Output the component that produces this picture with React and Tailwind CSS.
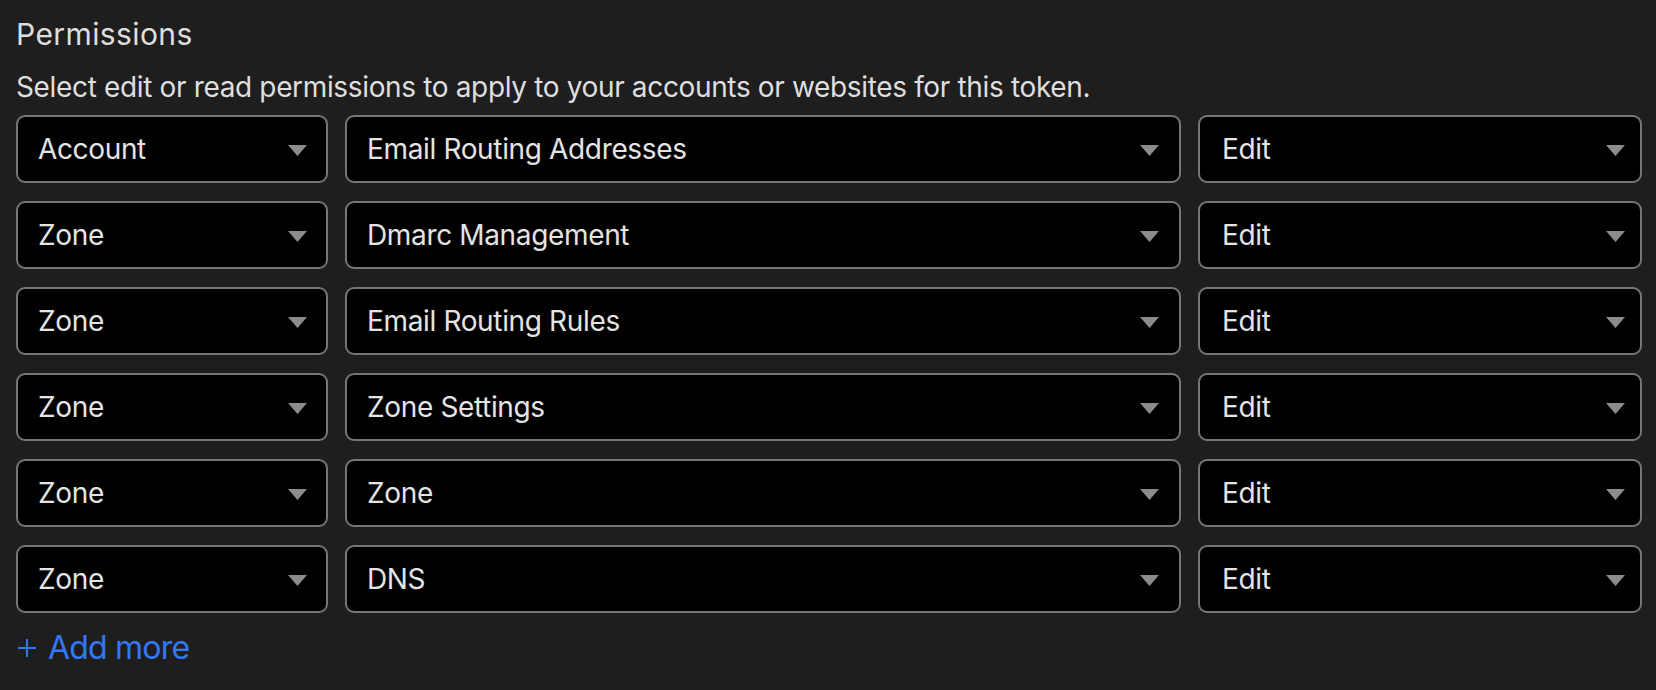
import { useState } from 'react'

const rows = [
  { scope: 'Account', perm: 'Email Routing Addresses', level: 'Edit' },
  { scope: 'Zone', perm: 'Dmarc Management', level: 'Edit' },
  { scope: 'Zone', perm: 'Email Routing Rules', level: 'Edit' },
  { scope: 'Zone', perm: 'Zone Settings', level: 'Edit' },
  { scope: 'Zone', perm: 'Zone', level: 'Edit' },
  { scope: 'Zone', perm: 'DNS', level: 'Edit' },
]

function Caret(){
  return (
    <svg width="19" height="11" viewBox="0 0 19 11" className="shrink-0 mt-[3px]">
      <path d="M0 0 H19 L9.5 11 Z" fill="#8b8c8e" />
    </svg>
  )
}

function Select({ value, className }){
  return (
    <div className={`h-[68px] flex items-center justify-between bg-black border-2 border-[#767676] rounded-[9px] ${className}`}>
      <span className="text-[28px] leading-[36px] tracking-[-0.35px] text-[#e4e4e4]">{value}</span>
      <Caret />
    </div>
  )
}

export default function App(){
  const [items] = useState(rows)

  return (
    <div className="min-h-[690px] w-full bg-[#1e1e1e] pl-[16px] pt-[16px] font-['Inter',sans-serif]">
      <h2 className="text-[30px] leading-[36px] tracking-[0.4px] text-[#dedede]">Permissions</h2>
      <p className="mt-[17px] text-[28px] leading-[36px] tracking-[-0.35px] text-[#dedede]">Select edit or read permissions to apply to your accounts or websites for this token.</p>

      <div className="mt-[10px] flex flex-col gap-[18px]">
        {items.map((r, i) => (
          <div key={i} className="flex">
            <Select value={r.scope} className="w-[312px] pl-[20px] pr-[19px]" />
            <Select value={r.perm} className="w-[836px] ml-[17px] pl-[20px] pr-[20px]" />
            <Select value={r.level} className="w-[444px] ml-[17px] pl-[22px] pr-[15px]" />
          </div>
        ))}
      </div>

      <button className="mt-[15px] flex items-center text-[#3478f6] text-[32px] leading-[40px] tracking-[-0.8px]">
        <svg width="18" height="18" viewBox="0 0 18 18" className="ml-[2px] mr-[12px]">
          <path d="M9 0 V18 M0 9 H18" stroke="#3478f6" strokeWidth="2" />
        </svg>
        <span>Add more</span>
      </button>
    </div>
  )
}
